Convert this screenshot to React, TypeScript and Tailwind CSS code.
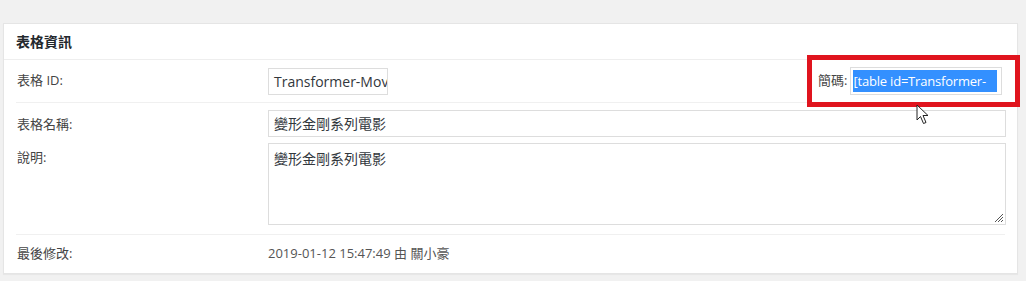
import React from 'react';

const font = '"Open Sans", "Noto Sans CJK TC", sans-serif';

const Cursor: React.FC = () => (
  <svg width="14" height="22" viewBox="0 0 14 22" className="absolute left-[916px] top-[104px]">
    <path d="M1 1 L1 16 L4.5 12.5 L7.5 19.5 L10 18.5 L7 11.5 L12 11.5 Z" fill="#fff" stroke="#222" strokeWidth="1" strokeLinejoin="round" />
  </svg>
);

const App: React.FC = () => {
  return (
    <div className="relative w-[1026px] h-[281px] bg-[#f1f1f1] text-[13px] text-[#444]" style={{ fontFamily: font }}>
      <div className="pt-[23px] pl-[3px] pr-[8px]">
        <div className="bg-white border border-[#e5e5e5] shadow-[0_1px_1px_rgba(0,0,0,0.04)] h-[251px]">
          <div className="h-[36px] border-b border-[#eeeeee] px-3 flex items-center">
            <h2 className="text-[14px] font-bold text-[#23282d]">表格資訊</h2>
          </div>
          <div className="px-3">
            <div className="flex items-center h-[43px] border-b border-[#f0f0f0]">
              <div className="w-[252px] pl-[1px]">表格 ID:</div>
              <div className="h-[27px] w-[120px] border border-[#dddddd] px-[5px] flex items-center overflow-hidden whitespace-nowrap text-[#32373c] text-[14px]">
                Transformer-Mov
              </div>
            </div>
            <div className="flex items-start pt-[7px] h-[40px]">
              <div className="w-[252px] pl-[1px] pt-[5px]">表格名稱:</div>
              <div className="h-[27px] flex-1 mr-[-1px] border border-[#dddddd] px-[5px] flex items-center text-[#32373c] text-[14px]">
                變形金剛系列電影
              </div>
            </div>
            <div className="flex items-start h-[92px] border-b border-[#f0f0f0]">
              <div className="w-[252px] pl-[1px] pt-[5px]">說明:</div>
              <div className="relative h-[82px] flex-1 mr-[-1px] border border-[#dddddd] px-[5px] pt-[4px] text-[#32373c] text-[14px]">
                變形金剛系列電影
                <svg width="10" height="10" viewBox="0 0 10 10" className="absolute right-[1px] bottom-[1px]">
                  <path d="M9 1 L1 9 M9 4 L4 9 M9 7 L7 9" stroke="#555" strokeWidth="1" />
                </svg>
              </div>
            </div>
            <div className="flex items-center h-[38px]">
              <div className="w-[252px] pl-[1px]">最後修改:</div>
              <div className="text-[#555]">2019-01-12 15:47:49 由 關小豪</div>
            </div>
          </div>
        </div>
      </div>

      <div className="absolute left-[807px] top-[55px] w-[213px] h-[52px] border-[5px] border-[#e0141e] flex items-center pl-[6px] gap-[3px]">
        <span className="text-[#444]">簡碼:</span>
        <div className="h-[28px] w-[152px] border border-[#dddddd] bg-white flex items-center pl-[2px]">
          <span className="bg-[#3390ff] text-white text-[13px] leading-[22px] whitespace-nowrap w-[144px] block tracking-[-0.2px]">[table id=Transformer-</span>
        </div>
      </div>
      <Cursor />
    </div>
  );
};

export default App;
